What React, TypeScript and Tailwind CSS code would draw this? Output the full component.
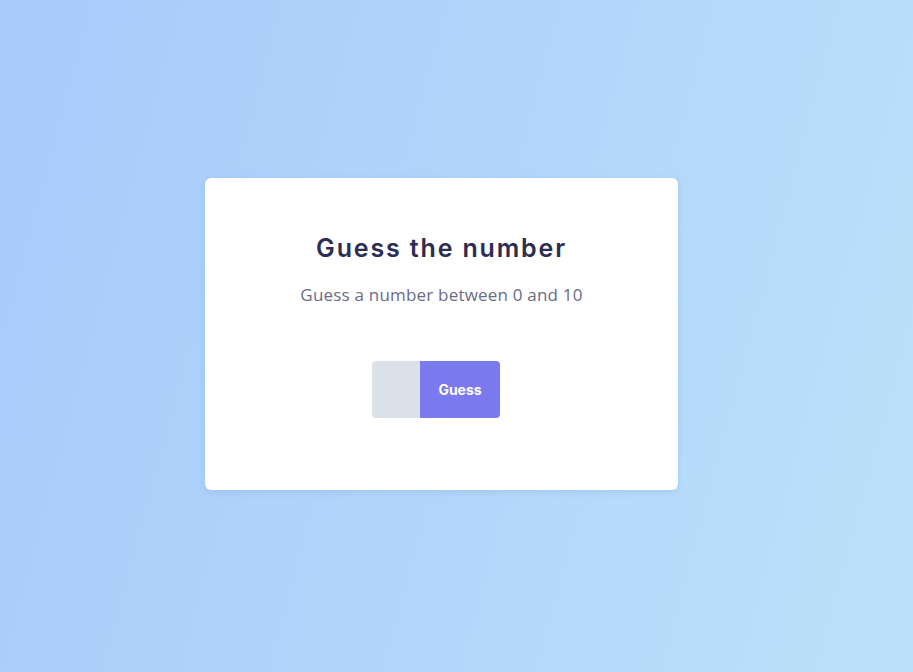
import React from 'react'

const App = () => {
  return (
    <div className="w-screen h-screen flex items-center justify-center bg-linear-[105deg] from-[#a7cafa] to-[#bbe1fa]">
      <div className="mr-[30px] mb-[4px] w-[473px] h-[312px] bg-white rounded-md shadow-[0_2px_6px_rgba(80,110,160,0.15)] flex flex-col items-center pt-[54px]">
        <h1 className="text-[25px] font-semibold text-[#2b2d52] leading-[32px] font-['Inter',sans-serif] tracking-[1.85px]">
          Guess the number
        </h1>
        <p className="mt-[20px] text-[17px] text-[#6a6b84] leading-[22px] font-['Open_Sans',sans-serif] tracking-[0.2px]">
          Guess a number between 0 and 10
        </p>
        <div className="mt-[55px] mr-[11px] flex">
          <input className="w-[48px] h-[57px] bg-[#dbe1e8] rounded-l-[4px] outline-none px-2" />
          <button className="w-[80px] h-[57px] bg-[#7b79ee] text-white text-[14px] font-bold rounded-r-[4px] font-['Inter',sans-serif]">
            Guess
          </button>
        </div>
      </div>
    </div>
  )
}

export default App
